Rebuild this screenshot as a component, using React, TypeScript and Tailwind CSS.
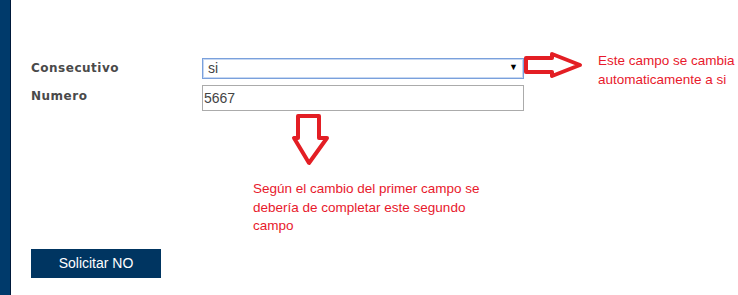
import React from "react";

export default function App() {
  return (
    <div className="relative flex w-[738px] h-[295px] bg-white overflow-hidden">
      <div className="w-[10px] h-full bg-[#003a6b]" />
      <div className="w-[1px] h-full bg-[#00193a]" />
      <div className="flex flex-col pl-[20px] pt-[58px]">
        <div className="flex items-center h-[20px]">
          <div className="w-[171px] text-[12px] font-bold text-[#4a4a4a] tracking-[0.5px] [font-family:'DejaVu_Sans',sans-serif] -mt-[1px]">
            Consecutivo
          </div>
          <div className="flex items-center justify-between w-[322px] h-[21px] border border-[#7aa0dc] shadow-[inset_0_0_0_1px_#c7d8f2] pl-[5px] pr-[3px] [font-family:'Liberation_Sans',Arial,sans-serif] text-[14px] text-[#444]">
            <span>si</span>
            <span className="text-[9px] text-black mr-[2px]">▼</span>
          </div>
        </div>
        <div className="flex items-center h-[26px] mt-[7px]">
          <div className="w-[171px] text-[12px] font-bold text-[#4a4a4a] tracking-[0.5px] [font-family:'DejaVu_Sans',sans-serif] -mt-[5px]">
            Numero
          </div>
          <div className="flex items-center w-[322px] h-[26px] border border-[#ababab] pl-[1px] [font-family:'Liberation_Sans',Arial,sans-serif] text-[14px] text-[#444]">
            5667
          </div>
        </div>
        <div className="mt-[138px]">
          <div className="flex items-center justify-center w-[130px] h-[29px] bg-[#003561] text-white text-[14px] [font-family:'Liberation_Sans',Arial,sans-serif]">
            Solicitar NO
          </div>
        </div>
      </div>

      {/* annotations */}
      <svg className="absolute left-[523px] top-[52px]" width="62" height="28" viewBox="0 0 62 28">
        <path d="M3 6 L29 6 L29 2 L57 13 L29 24 L29 20 L3 20 Z" fill="white" stroke="#e31e24" strokeWidth="4" strokeLinejoin="round" />
      </svg>
      <div className="absolute left-[598px] top-[51px] text-[13.5px] leading-[19px] text-[#e8192c] [font-family:'Liberation_Sans',Arial,sans-serif]">
        Este campo se cambia
        <br />
        automaticamente a si
      </div>
      <svg className="absolute left-[291px] top-[113px]" width="40" height="54" viewBox="0 0 40 54">
        <path d="M7 3 L28 3 L28 25 L36 25 L18 50 L3 25 L7 25 Z" fill="white" stroke="#e31e24" strokeWidth="4" strokeLinejoin="round" />
      </svg>
      <div className="absolute left-[253px] top-[180px] text-[13.5px] leading-[18.5px] text-[#e8192c] [font-family:'Liberation_Sans',Arial,sans-serif]">
        Según el cambio del primer campo se
        <br />
        debería de completar este segundo
        <br />
        campo
      </div>
    </div>
  );
}
